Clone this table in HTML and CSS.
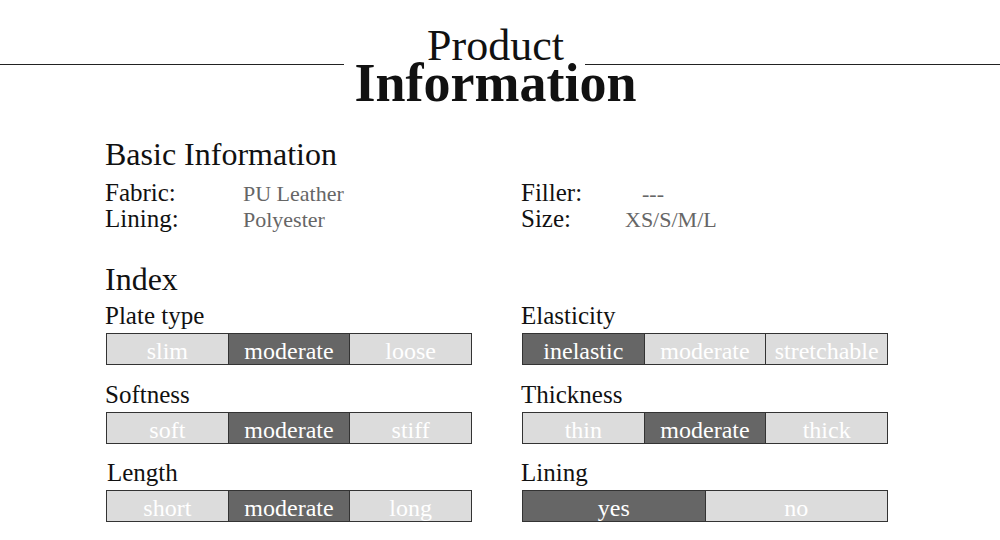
FILE: index.html
```html
<!DOCTYPE html>
<html lang="en">
<head>
<meta charset="utf-8">
<title>Product Information</title>
<link rel="stylesheet" href="styles.css">
</head>
<body>
<header class="title">
  <div class="rule rule-left"></div>
  <h1 class="title-text">
    <span class="title-small">Product</span>
    <span class="title-big">Information</span>
  </h1>
  <div class="rule rule-right"></div>
</header>

<main class="content">
  <section class="basic">
    <h2 class="section-title">Basic Information</h2>
    <div class="basic-grid">
      <div class="basic-col">
        <div class="info-row"><span class="info-label">Fabric:</span><span class="info-value">PU Leather</span></div>
        <div class="info-row"><span class="info-label">Lining:</span><span class="info-value">Polyester</span></div>
      </div>
      <div class="basic-col basic-col-right">
        <div class="info-row"><span class="info-label">Filler:</span><span class="info-value info-dash">---</span></div>
        <div class="info-row"><span class="info-label">Size:</span><span class="info-value">XS/S/M/L</span></div>
      </div>
    </div>
  </section>

  <section class="index">
    <h2 class="section-title">Index</h2>
    <div class="index-grid">
      <div class="metric">
        <div class="metric-label">Plate type</div>
        <div class="bar">
          <span class="cell">slim</span><span class="cell on">moderate</span><span class="cell">loose</span>
        </div>
      </div>
      <div class="metric">
        <div class="metric-label">Elasticity</div>
        <div class="bar">
          <span class="cell on">inelastic</span><span class="cell">moderate</span><span class="cell">stretchable</span>
        </div>
      </div>
      <div class="metric">
        <div class="metric-label">Softness</div>
        <div class="bar">
          <span class="cell">soft</span><span class="cell on">moderate</span><span class="cell">stiff</span>
        </div>
      </div>
      <div class="metric">
        <div class="metric-label">Thickness</div>
        <div class="bar">
          <span class="cell">thin</span><span class="cell on">moderate</span><span class="cell">thick</span>
        </div>
      </div>
      <div class="metric">
        <div class="metric-label metric-label-indent">Length</div>
        <div class="bar">
          <span class="cell">short</span><span class="cell on">moderate</span><span class="cell">long</span>
        </div>
      </div>
      <div class="metric">
        <div class="metric-label">Lining</div>
        <div class="bar">
          <span class="cell on">yes</span><span class="cell">no</span>
        </div>
      </div>
    </div>
  </section>
</main>
</body>
</html>
```

FILE: styles.css
```css
* { box-sizing: border-box; }

html, body {
  margin: 0;
  padding: 0;
  background: #fff;
}

body {
  width: 1000px;
  height: 540px;
  overflow: hidden;
  font-family: "Liberation Serif", "Times New Roman", serif;
  color: #111;
}

/* ---------- title ---------- */
.title {
  display: flex;
  align-items: flex-start;
  padding-top: 26px;
  height: 136px;
}

.rule {
  border-top: 1px solid #222;
  margin-top: 38px;
}

.rule-left {
  flex: none;
  width: 344px;
}

.rule-right {
  flex: 1;
}

.title-text {
  flex: none;
  width: 303px;
  margin: 0 -62px 0 0;
  display: flex;
  flex-direction: column;
  align-items: center;
  font-weight: normal;
}

.title-small {
  font-size: 44px;
  line-height: 40px;
}

.title-big {
  font-size: 54px;
  font-weight: bold;
  line-height: 35px;
}

/* ---------- content ---------- */
.content {
  padding-left: 105px;
  width: 890px;
}

.section-title {
  margin: 0;
  font-weight: normal;
  font-size: 32px;
  line-height: 36px;
}

.basic-grid {
  display: grid;
  grid-template-columns: 416px 1fr;
  padding-top: 7px;
}

.info-row {
  display: flex;
  align-items: baseline;
  height: 26px;
}

.info-label {
  font-size: 25px;
  width: 138px;
}

.info-value {
  font-size: 22px;
  color: #666;
}

.basic-col-right .info-label {
  width: 104px;
}

.info-dash {
  padding-left: 17px;
}

.index {
  margin-top: 30px;
}

.index-grid {
  display: grid;
  grid-template-columns: 367px 367px;
  column-gap: 49px;
  row-gap: 15px;
  padding-top: 4px;
}

.metric:nth-child(n+5) {
  margin-top: -1px;
}

.metric-label {
  font-size: 25px;
  line-height: 30px;
  margin-bottom: 2px;
}

.metric-label-indent {
  padding-left: 2px;
}

.bar {
  display: flex;
  margin-left: 1px;
  height: 32px;
  border: 1px solid #333;
  background: #dcdcdc;
}

.cell {
  flex: 1;
  text-align: center;
  font-size: 24px;
  line-height: 34px;
  color: #fff;
  background: #dcdcdc;
  border-left: 1px solid #333;
}

.cell:first-child {
  border-left: none;
}

.cell.on {
  background: #666;
}
```
